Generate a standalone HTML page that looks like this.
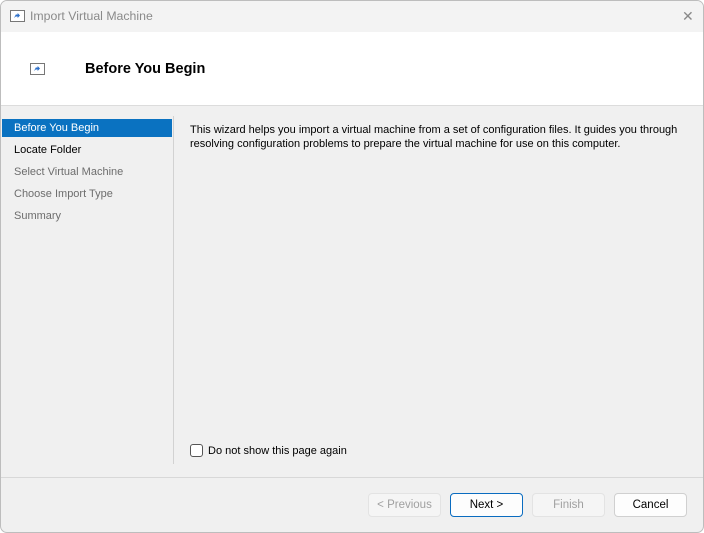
<!DOCTYPE html>
<html><head><style>
body{margin:0;width:704px;height:533px;overflow:hidden;background:#fff;font-family:"Liberation Sans",sans-serif;font-size:12px;color:#000}
.win{position:absolute;left:0;top:0;width:702px;height:531px;border:1px solid #bdbdbd;border-radius:7px;background:#f0f0f0;overflow:hidden}
.title{position:absolute;left:0;top:0;width:702px;height:31px;background:#f3f3f3}
.title span{position:absolute;left:29px;top:8px;color:#8a8a8a;font-size:12.3px}
.close{position:absolute;left:681px;top:7px;color:#888;font-size:14px}
.hdr{position:absolute;left:0;top:31px;width:702px;height:73px;background:#fff;border-bottom:1px solid #dcdcdc}
.hdr b{position:absolute;left:84px;top:29px;font-size:14.5px}
.icon{position:absolute;width:13px;height:10px;border:1px solid #777;background:#fff}
.icon i{position:absolute;left:3px;top:2px;width:6px;height:5px;background:#2c6fc9;clip-path:polygon(0 100%,30% 30%,60% 30%,60% 0,100% 50%,60% 100%,60% 70%,30% 70%)}
.nav div{position:absolute;left:1px;width:170px;height:18px;line-height:18px;padding-left:12px;box-sizing:border-box;font-size:11px}
.sel{background:#0a72c1;color:#fff}
.dis{color:#6d6d6d}
.vsep{position:absolute;left:172px;top:115px;width:1px;height:348px;background:#d2d2d2}
.hsep{position:absolute;left:0;top:476px;width:702px;height:1px;background:#d8d8d8}
.txt{position:absolute;left:189px;top:123px;width:500px;line-height:13.5px;font-size:11px}
.cb{position:absolute;left:189px;top:443px;width:11px;height:11px;border:1px solid #555;border-radius:3px;background:#fff}
.cbl{position:absolute;left:207px;top:444px;font-size:11px}
.btn{position:absolute;top:492px;width:71px;height:22px;border:1px solid #d0d0d0;border-radius:4px;background:#fdfdfd;text-align:center;line-height:22px;font-size:11.5px}
.btn.d{color:#a0a0a0;background:#f5f5f5;border-color:#e3e3e3}
.btn.p{border-color:#0a6cc0}
</style></head><body><div class="win">
<div class="title"><div class="icon" style="left:9px;top:9px"><i></i></div><span>Import Virtual Machine</span><div class="close">✕</div></div>
<div class="hdr"><div class="icon" style="left:29px;top:31px"><i></i></div><b>Before You Begin</b></div>
<div class="nav">
<div class="sel" style="top:118px">Before You Begin</div>
<div style="top:140px">Locate Folder</div>
<div class="dis" style="top:162px">Select Virtual Machine</div>
<div class="dis" style="top:184px">Choose Import Type</div>
<div class="dis" style="top:206px">Summary</div>
</div>
<div class="vsep"></div>
<div class="txt">This wizard helps you import a virtual machine from a set of configuration files. It guides you through resolving configuration problems to prepare the virtual machine for use on this computer.</div>
<div class="cb"></div><div class="cbl">Do not show this page again</div>
<div class="hsep"></div>
<div class="btn d" style="left:367px">&lt; Previous</div>
<div class="btn p" style="left:449px">Next &gt;</div>
<div class="btn d" style="left:531px">Finish</div>
<div class="btn" style="left:613px">Cancel</div>
</div></body></html>
